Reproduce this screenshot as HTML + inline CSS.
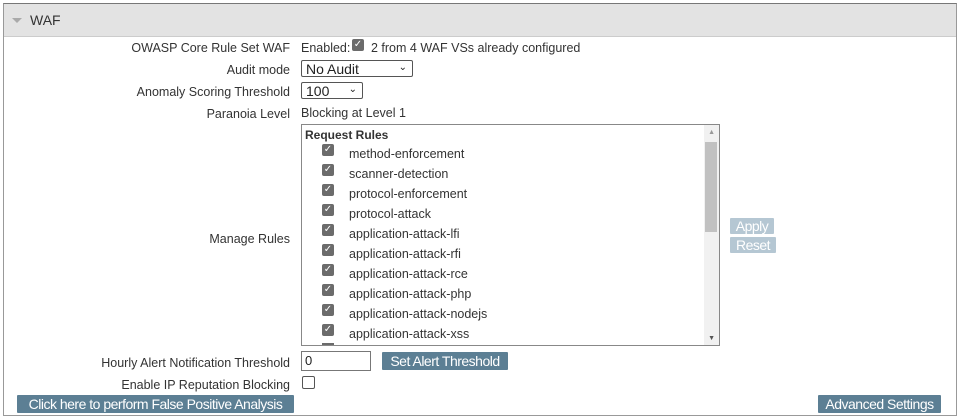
<!DOCTYPE html>
<html><head><style>
body{margin:0;width:960px;height:418px;background:#fff;font-family:"Liberation Sans",sans-serif;font-size:12.5px;color:#333;position:relative;overflow:hidden}
.a{position:absolute}
.box{left:3px;top:3px;width:952px;height:411px;border:1px solid #999;border-top:1px solid #777}
.hdr{left:4px;top:4px;width:952px;height:32px;background:#e3e3e3;border-bottom:1px solid #ccc}
.lbl{right:670px;text-align:right;white-space:nowrap;font-size:12.5px;color:#333}
.cb{width:12px;height:12px;background:#6b6b6b;border-radius:2px;color:#fff;font-size:10px;line-height:12px;text-align:center}
.btn{background:#5c7f94;color:#fff;font-size:14px;line-height:18px;text-align:center;border-radius:1px;letter-spacing:-0.5px;white-space:nowrap}
.sel{border:1px solid #555;border-radius:2px;height:17px;font-size:14px;line-height:16px;padding-left:4px;box-sizing:border-box;color:#222}
.sel span{position:absolute;right:5px;top:-1px;font-size:10px}
.it{left:349px;font-size:12.5px}
</style></head><body>
<div class="a box"></div>
<div class="a hdr"></div>
<div class="a" style="left:12px;top:18px;width:0;height:0;border-left:5px solid transparent;border-right:5px solid transparent;border-top:5px solid #aaa"></div>
<div class="a" style="left:30px;top:12px;font-size:14px;color:#333">WAF</div>

<div class="a lbl" style="top:41px">OWASP Core Rule Set WAF</div>
<div class="a" style="left:301px;top:41px">Enabled:</div>
<div class="a cb" style="left:352px;top:39px;width:12px;height:12px">✓</div>
<div class="a" style="left:371px;top:41px">2 from 4 WAF VSs already configured</div>

<div class="a lbl" style="top:63px">Audit mode</div>
<div class="a sel" style="left:301px;top:60px;width:112px">No Audit<span>⌄</span></div>
<div class="a lbl" style="top:85px">Anomaly Scoring Threshold</div>
<div class="a sel" style="left:301px;top:82px;width:62px">100<span>⌄</span></div>
<div class="a lbl" style="top:107px">Paranoia Level</div>
<div class="a" style="left:301px;top:106px">Blocking at Level 1</div>

<div class="a lbl" style="top:232px">Manage Rules</div>
<div class="a" style="left:301px;top:124px;width:419px;height:222px;border:1px solid #888;box-sizing:border-box;overflow:hidden">
<div class="a" style="right:0;top:0;width:15px;height:220px;background:#f1f1f1"></div>
<div class="a" style="right:2px;top:17px;width:12px;height:90px;background:#c1c1c1"></div>
<div class="a" style="right:4px;top:4px;font-size:7px;color:#999">▲</div>
<div class="a" style="right:4px;bottom:3px;font-size:7px;color:#555">▼</div>
<div class="a" style="left:3px;top:3px;font-weight:bold;font-size:12px">Request Rules</div>
</div>
<div class="a cb" style="left:322px;top:144px">✓</div><div class="a it" style="top:147px">method-enforcement</div>
<div class="a cb" style="left:322px;top:164px">✓</div><div class="a it" style="top:167px">scanner-detection</div>
<div class="a cb" style="left:322px;top:184px">✓</div><div class="a it" style="top:187px">protocol-enforcement</div>
<div class="a cb" style="left:322px;top:204px">✓</div><div class="a it" style="top:207px">protocol-attack</div>
<div class="a cb" style="left:322px;top:224px">✓</div><div class="a it" style="top:227px">application-attack-lfi</div>
<div class="a cb" style="left:322px;top:244px">✓</div><div class="a it" style="top:247px">application-attack-rfi</div>
<div class="a cb" style="left:322px;top:264px">✓</div><div class="a it" style="top:267px">application-attack-rce</div>
<div class="a cb" style="left:322px;top:284px">✓</div><div class="a it" style="top:287px">application-attack-php</div>
<div class="a cb" style="left:322px;top:304px">✓</div><div class="a it" style="top:307px">application-attack-nodejs</div>
<div class="a cb" style="left:322px;top:324px">✓</div><div class="a it" style="top:327px">application-attack-xss</div>
<div class="a" style="left:322px;top:343px;width:12px;height:2px;background:#6b6b6b"></div>

<div class="a btn" style="left:730px;top:218px;width:44px;height:16px;line-height:16px;background:#b5c7d3">Apply</div>
<div class="a btn" style="left:730px;top:237px;width:46px;height:16px;line-height:16px;background:#b5c7d3">Reset</div>

<div class="a lbl" style="top:356px">Hourly Alert Notification Threshold</div>
<div class="a" style="left:301px;top:351px;width:70px;height:20px;border:1px solid #777;box-sizing:border-box;font-size:13px;padding:1px 3px;color:#222">0</div>
<div class="a btn" style="left:382px;top:352px;width:126px;height:18px">Set Alert Threshold</div>
<div class="a lbl" style="top:378px">Enable IP Reputation Blocking</div>
<div class="a" style="left:302px;top:376px;width:11px;height:11px;border:1px solid #555;border-radius:2px"></div>

<div class="a btn" style="left:17px;top:395px;width:277px;height:18px">Click here to perform False Positive Analysis</div>
<div class="a btn" style="left:818px;top:395px;width:123px;height:18px">Advanced Settings</div>
</body></html>
